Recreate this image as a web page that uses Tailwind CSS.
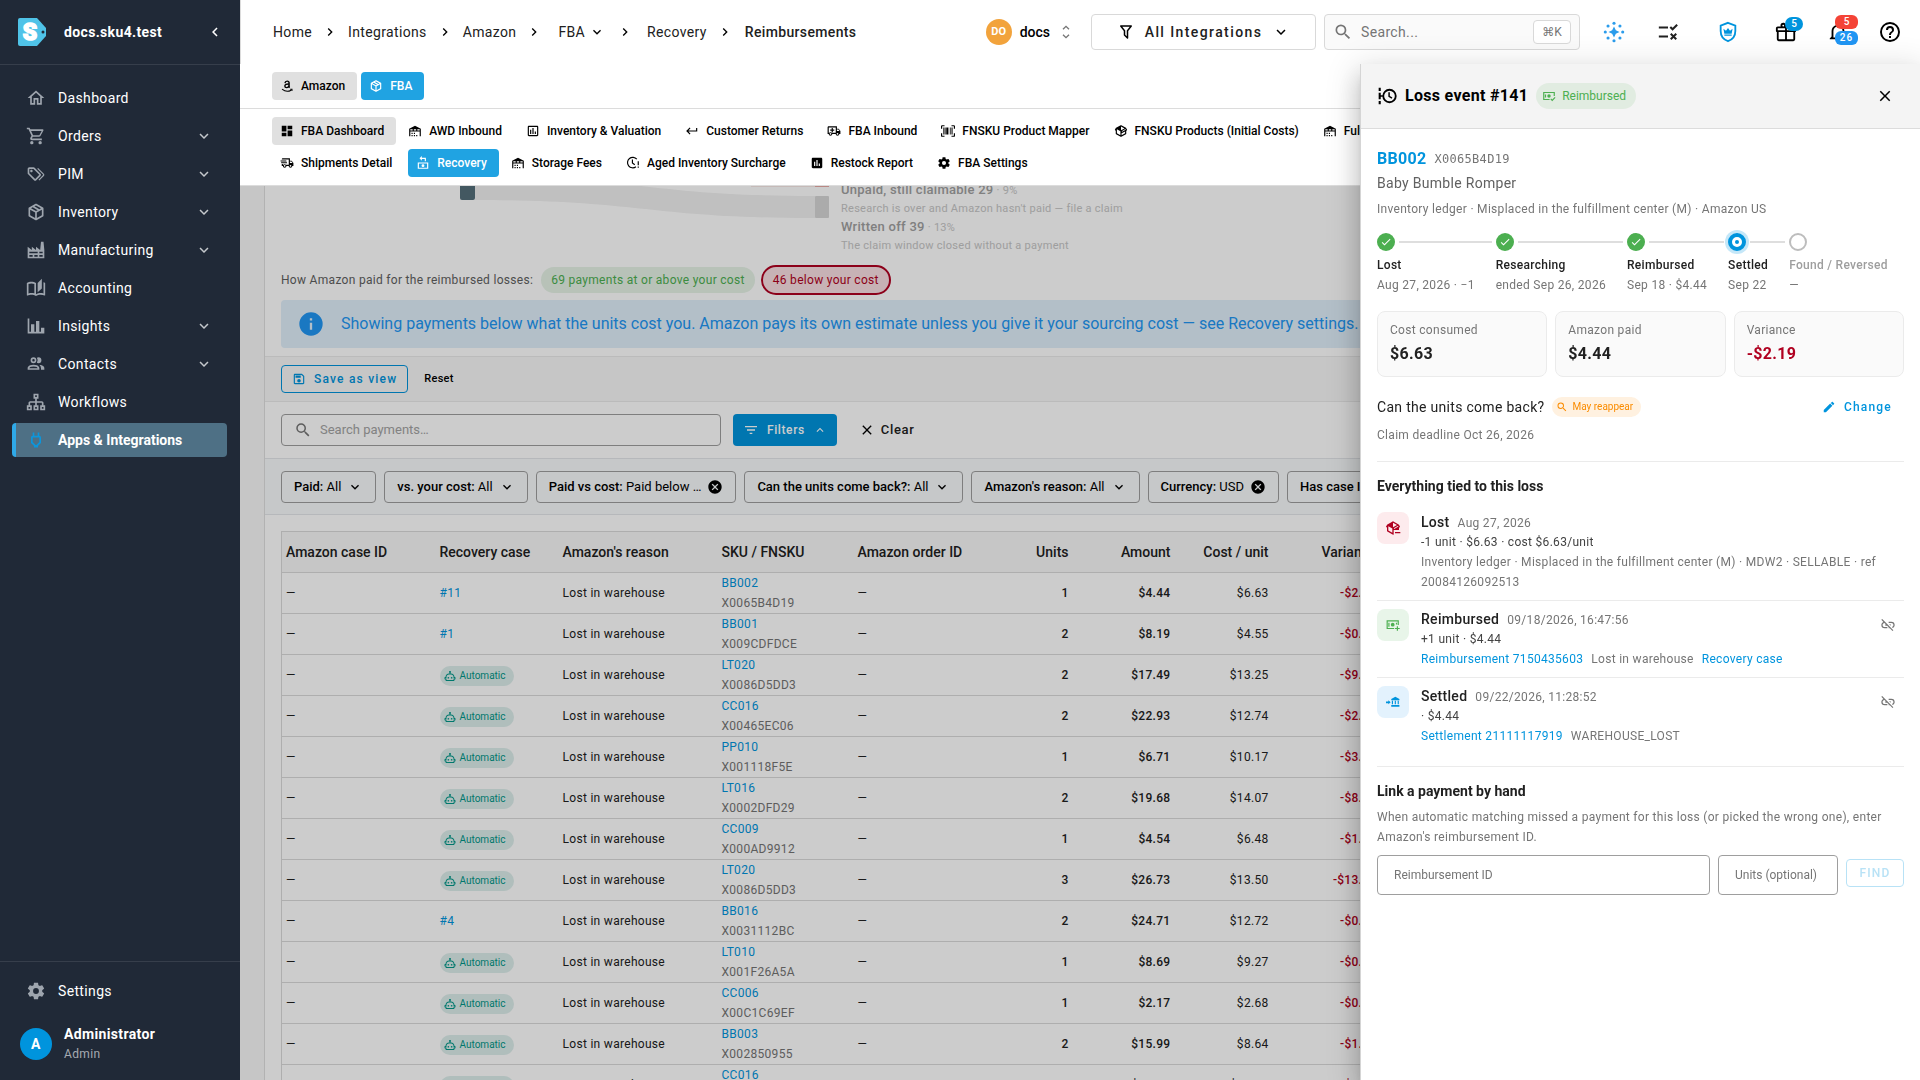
<!DOCTYPE html>
<html lang="en">
  <head>
    <meta charset="utf-8" />
    <meta name="viewport" content="width=device-width" />
    <title>Reimbursements - docs.sku4.test</title>
    <script src="https://cdn.jsdelivr.net/npm/@tailwindcss/browser@4"></script>
  </head>
  <body class="flex h-screen overflow-hidden bg-white font-[Roboto,'Noto_Sans',sans-serif] text-[#212121]">
    <!-- Icon set, used everywhere with <use> -->
    <svg class="hidden" xmlns="http://www.w3.org/2000/svg">
      <symbol id="home" viewBox="0 0 24 24"><path d="M12 5.69L17 10.19V18H15V12H9V18H7V10.19L12 5.69M12 3L2 12H5V20H11V14H13V20H19V12H22L12 3Z" /></symbol>
      <symbol id="cart" viewBox="0 0 24 24"><path d="M17,18A2,2 0 0,1 19,20A2,2 0 0,1 17,22C15.89,22 15,21.1 15,20C15,18.89 15.89,18 17,18M1,2H4.27L5.21,4H20A1,1 0 0,1 21,5C21,5.17 20.95,5.34 20.88,5.5L17.3,11.97C16.96,12.58 16.3,13 15.55,13H8.1L7.2,14.63L7.17,14.75A0.25,0.25 0 0,0 7.42,15H19V17H7C5.89,17 5,16.1 5,15C5,14.65 5.09,14.32 5.24,14.04L6.6,11.59L3,4H1V2M7,18A2,2 0 0,1 9,20A2,2 0 0,1 7,22C5.89,22 5,21.1 5,20C5,18.89 5.89,18 7,18M16,11L18.78,6H6.14L8.5,11H16Z" /></symbol>
      <symbol id="tags" viewBox="0 0 24 24"><path d="M6.5 10C7.3 10 8 9.3 8 8.5S7.3 7 6.5 7 5 7.7 5 8.5 5.7 10 6.5 10M9 6L16 13L11 18L4 11V6H9M9 4H4C2.9 4 2 4.9 2 6V11C2 11.6 2.2 12.1 2.6 12.4L9.6 19.4C9.9 19.8 10.4 20 11 20S12.1 19.8 12.4 19.4L17.4 14.4C17.8 14 18 13.5 18 13C18 12.4 17.8 11.9 17.4 11.6L10.4 4.6C10.1 4.2 9.6 4 9 4M13.5 5.7L14.5 4.7L21.4 11.6C21.8 12 22 12.5 22 13S21.8 14.1 21.4 14.4L16 19.8L15 18.8L20.7 13L13.5 5.7Z" /></symbol>
      <symbol id="box" viewBox="0 0 24 24"><path d="M21,16.5C21,16.88 20.79,17.21 20.47,17.38L12.57,21.82C12.41,21.94 12.21,22 12,22C11.79,22 11.59,21.94 11.43,21.82L3.53,17.38C3.21,17.21 3,16.88 3,16.5V7.5C3,7.12 3.21,6.79 3.53,6.62L11.43,2.18C11.59,2.06 11.79,2 12,2C12.21,2 12.41,2.06 12.57,2.18L20.47,6.62C20.79,6.79 21,7.12 21,7.5V16.5M12,4.15L10.11,5.22L16,8.61L17.96,7.5L12,4.15M6.04,7.5L12,10.85L13.96,9.75L8.08,6.35L6.04,7.5M5,15.91L11,19.29V12.58L5,9.21V15.91M19,15.91V9.21L13,12.58V19.29L19,15.91Z" /></symbol>
      <symbol id="factory" viewBox="0 0 24 24"><path d="M4,18V20H8V18H4M4,14V16H14V14H4M10,18V20H14V18H10M16,14V16H20V14H16M16,18V20H20V18H16M2,22V8L7,12V8L12,12V8L17,12L18,2H21L22,12V22H2Z" /></symbol>
      <symbol id="book" viewBox="0 0 24 24"><path d="M19 1L14 6V17L19 12.5V1M21 5V18.5C19.9 18.15 18.7 18 17.5 18C15.8 18 13.35 18.65 12 19.5V6C10.55 4.9 8.45 4.5 6.5 4.5C4.55 4.5 2.45 4.9 1 6V20.65C1 20.9 1.25 21.15 1.5 21.15C1.6 21.15 1.65 21.1 1.75 21.1C3.1 20.45 5.05 20 6.5 20C8.45 20 10.55 20.4 12 21.5C13.35 20.65 15.8 20 17.5 20C19.15 20 20.85 20.3 22.25 21.05C22.35 21.1 22.4 21.1 22.5 21.1C22.75 21.1 23 20.85 23 20.6V6C22.4 5.55 21.75 5.25 21 5M10 18.41C8.75 18.09 7.5 18 6.5 18C5.44 18 4.18 18.19 3 18.5V7.13C3.91 6.73 5.14 6.5 6.5 6.5C7.86 6.5 9.09 6.73 10 7.13V18.41Z" /></symbol>
      <symbol id="chart" viewBox="0 0 24 24"><path d="M22,21H2V3H4V19H6V10H10V19H12V6H16V19H18V14H22V21Z" /></symbol>
      <symbol id="people" viewBox="0 0 24 24"><path d="M13.07 10.41A5 5 0 0 0 13.07 4.59A3.39 3.39 0 0 1 15 4A3.5 3.5 0 0 1 15 11A3.39 3.39 0 0 1 13.07 10.41M5.5 7.5A3.5 3.5 0 1 1 9 11A3.5 3.5 0 0 1 5.5 7.5M7.5 7.5A1.5 1.5 0 1 0 9 6A1.5 1.5 0 0 0 7.5 7.5M16 17V19H2V17S2 13 9 13 16 17 16 17M14 17C13.86 16.22 12.67 15 9 15S4.07 16.31 4 17M15.95 13A5.32 5.32 0 0 1 18 17V19H22V17S22 13.37 15.94 13Z" /></symbol>
      <symbol id="sitemap" viewBox="0 0 24 24"><path fill-rule="evenodd" d="M9,2V8H11V11H5C3.89,11 3,11.89 3,13V16H1V22H7V16H5V13H11V16H9V22H15V16H13V13H19V16H17V22H23V16H21V13C21,11.89 20.11,11 19,11H13V8H15V2H9M11,4H13V6H11V4M3,18H5V20H3V18M11,18H13V20H11V18M19,18H21V20H19V18Z" /></symbol>
      <symbol id="plug" viewBox="0 0 24 24"><path fill-rule="evenodd" d="M16 9V14.5L12.5 18H11.5L8 14.5V9H16M16 3H14V7H10V3H8V7C6.9 7 6 7.9 6 9V15.5L9.5 19V21H14.5V19L18 15.5V9C18 7.9 17.1 7 16 7V3Z" /></symbol>
      <symbol id="cog" viewBox="0 0 24 24"><path d="M12,15.5A3.5,3.5 0 0,1 8.5,12A3.5,3.5 0 0,1 12,8.5A3.5,3.5 0 0,1 15.5,12A3.5,3.5 0 0,1 12,15.5M19.43,12.97C19.47,12.65 19.5,12.33 19.5,12C19.5,11.67 19.47,11.34 19.43,11L21.54,9.37C21.73,9.22 21.78,8.95 21.66,8.73L19.66,5.27C19.54,5.05 19.27,4.96 19.05,5.05L16.56,6.05C16.04,5.66 15.5,5.32 14.87,5.07L14.5,2.42C14.46,2.18 14.25,2 14,2H10C9.75,2 9.54,2.18 9.5,2.42L9.13,5.07C8.5,5.32 7.96,5.66 7.44,6.05L4.95,5.05C4.73,4.96 4.46,5.05 4.34,5.27L2.34,8.73C2.21,8.95 2.27,9.22 2.46,9.37L4.57,11C4.53,11.34 4.5,11.67 4.5,12C4.5,12.33 4.53,12.65 4.57,12.97L2.46,14.63C2.27,14.78 2.21,15.05 2.34,15.27L4.34,18.73C4.46,18.95 4.73,19.03 4.95,18.95L7.44,17.94C7.96,18.34 8.5,18.68 9.13,18.93L9.5,21.58C9.54,21.82 9.75,22 10,22H14C14.25,22 14.46,21.82 14.5,21.58L14.87,18.93C15.5,18.67 16.04,18.34 16.56,17.94L19.05,18.95C19.27,19.03 19.54,18.95 19.66,18.73L21.66,15.27C21.78,15.05 21.73,14.78 21.54,14.63L19.43,12.97Z" /></symbol>
      <symbol id="down" viewBox="0 0 24 24"><path d="M7.41,8.58L12,13.17L16.59,8.58L18,10L12,16L6,10L7.41,8.58Z" /></symbol>
      <symbol id="up" viewBox="0 0 24 24"><path d="M7.41,15.41L12,10.83L16.59,15.41L18,14L12,8L6,14L7.41,15.41Z" /></symbol>
      <symbol id="right" viewBox="0 0 24 24"><path d="M8.59,16.58L13.17,12L8.59,7.41L10,6L16,12L10,18L8.59,16.58Z" /></symbol>
      <symbol id="left" viewBox="0 0 24 24"><path d="M15.41,16.58L10.83,12L15.41,7.41L14,6L8,12L14,18L15.41,16.58Z" /></symbol>
      <symbol id="updown" viewBox="0 0 24 24"><path d="M7.5 8L12 3.500L16.5 8M7.5 16L12 20.500L16.5 16" fill="none" stroke="currentColor" stroke-width="2" /></symbol>
      <symbol id="amazon" viewBox="0 0 24 24"><path d="M8.5 7C8.8 4.6 10.4 3.6 12.3 3.6C14.6 3.6 15.6 4.8 15.6 6.8V12.4C15.6 13.6 15.9 14.2 16.6 14.8M15.4 8.6C11 8.4 8.3 9.4 8.3 12C8.3 14 9.6 14.8 11.2 14.8C13.4 14.8 15.4 13.2 15.4 10.8" fill="none" stroke="currentColor" stroke-width="2.4" /><path d="M3.5 17.5C8.5 21.5 15 21.5 19 19.2M17.5 17.6H20.5V20.6" fill="none" stroke="currentColor" stroke-width="1.8" /></symbol>
      <symbol id="dash" viewBox="0 0 24 24"><path d="M13,3V9H21V3M13,21H21V11H13M3,21H11V15H3M3,13H11V3H3V13Z" /></symbol>
      <symbol id="warehouse" viewBox="0 0 24 24"><path d="M6 19H8V21H6V19M12 3L2 8V21H4V13H20V21H22V8L12 3M8 11H4V9H8V11M14 11H10V9H14V11M20 11H16V9H20V11M6 15H8V17H6V15M10 15H12V17H10V15M10 19H12V21H10V19M14 19H16V21H14V19Z" /></symbol>
      <symbol id="boxchart" viewBox="0 0 24 24"><path d="M9 17H7V10H9V17M13 17H11V7H13V17M17 17H15V13H17V17M19 19H5V5H19V19.1M19 3H5C3.9 3 3 3.9 3 5V19C3 20.1 3.9 21 5 21H19C20.1 21 21 20.1 21 19V5C21 3.9 20.1 3 19 3Z" /></symbol>
      <symbol id="boxchart-solid" viewBox="0 0 24 24"><path fill-rule="evenodd" d="M19,3H5C3.9,3 3,3.9 3,5V19C3,20.1 3.9,21 5,21H19C20.1,21 21,20.1 21,19V5C21,3.9 20.1,3 19,3M9,17H7V10H9V17M13,17H11V7H13V17M17,17H15V13H17V17Z" /></symbol>
      <symbol id="return" viewBox="0 0 24 24"><path d="M19,7V11H5.83L9.41,7.41L8,6L2,12L8,18L9.41,16.58L5.83,13H21V7H19Z" /></symbol>
      <symbol id="truck" viewBox="0 0 24 24"><path d="M18 18.5C18.83 18.5 19.5 17.83 19.5 17C19.5 16.17 18.83 15.5 18 15.5C17.17 15.5 16.5 16.17 16.5 17C16.5 17.83 17.17 18.5 18 18.5M19.5 9.5H17V12H21.46L19.5 9.5M6 18.5C6.83 18.5 7.5 17.83 7.5 17C7.5 16.17 6.83 15.5 6 15.5C5.17 15.5 4.5 16.17 4.5 17C4.5 17.83 5.17 18.5 6 18.5M20 8L23 12V17H21C21 18.66 19.66 20 18 20C16.34 20 15 18.66 15 17H9C9 18.66 7.66 20 6 20C4.34 20 3 18.66 3 17H1V6C1 4.89 1.89 4 3 4H17V8H20M3 6V15H3.76C4.31 14.39 5.11 14 6 14C6.89 14 7.69 14.39 8.24 15H15V6H3M8 7H10V9.5H12.5V11.5H10V14H8V11.5H5.5V9.5H8V7Z" /></symbol>
      <symbol id="truckfast" viewBox="0 0 24 24"><path d="M.75 7.5H10.75L11.25 9.5H1.25L.75 7.5M1.75 10.5H11.75L12.25 12.5H2.25L1.75 10.5M18 18.5C18.83 18.5 19.5 17.83 19.5 17C19.5 16.17 18.83 15.5 18 15.5C17.17 15.5 16.5 16.17 16.5 17C16.5 17.83 17.17 18.5 18 18.5M19.5 9.5H17V12H21.46L19.5 9.5M8 18.5C8.83 18.5 9.5 17.83 9.5 17C9.5 16.17 8.83 15.5 8 15.5C7.17 15.5 6.5 16.17 6.5 17C6.5 17.83 7.17 18.5 8 18.5M20 8L23 12V17H21C21 18.66 19.66 20 18 20C16.34 20 15 18.66 15 17H11C11 18.66 9.65 20 8 20C6.34 20 5 18.66 5 17H3V13.5H5V15H5.76C6.31 14.39 7.11 14 8 14C8.89 14 9.69 14.39 10.24 15H15V6H3C3 4.89 3.89 4 5 4H17V8H20Z" /></symbol>
      <symbol id="barcode" viewBox="0 0 24 24"><path d="M4,6H6V18H4V6M7,6H8V18H7V6M9,6H12V18H9V6M13,6H14V18H13V6M16,6H18V18H16V6M19,6H20V18H19V6M2,4V8H0V4A2,2 0 0,1 2,2H6V4H2M22,2A2,2 0 0,1 24,4V8H22V4H18V2H22M2,16V20H6V22H2A2,2 0 0,1 0,20V16H2M22,20V16H24V20A2,2 0 0,1 22,22H18V20H22Z" /></symbol>
      <symbol id="openbox" viewBox="0 0 24 24"><path d="M2,10.96C1.5,10.68 1.35,10.07 1.63,9.59L3.13,7C3.24,6.8 3.41,6.66 3.6,6.58L11.43,2.18C11.59,2.06 11.79,2 12,2C12.21,2 12.41,2.06 12.57,2.18L20.47,6.62C20.66,6.72 20.82,6.88 20.91,7.08L22.36,9.6C22.64,10.08 22.47,10.69 22,10.96L21,11.54V16.5C21,16.88 20.79,17.21 20.47,17.38L12.57,21.82C12.41,21.94 12.21,22 12,22C11.79,22 11.59,21.94 11.43,21.82L3.53,17.38C3.21,17.21 3,16.88 3,16.5V10.96C2.7,11.13 2.32,11.14 2,10.96M12,4.15V4.15L12,10.85V10.85L17.96,7.5L12,4.15M5,15.91L11,19.29V12.58L5,9.21V15.91M19,15.91V12.69L14,15.59C13.67,15.77 13.3,15.76 13,15.6V19.29L19,15.91M13.85,13.36L20.13,9.73L19.55,8.72L13.27,12.35L13.85,13.36Z" /></symbol>
      <symbol id="boxminus" viewBox="0 0 24 24"><path d="M2,10.96C1.5,10.68 1.35,10.07 1.63,9.59L3.13,7C3.24,6.8 3.41,6.66 3.6,6.58L11.43,2.18C11.59,2.06 11.79,2 12,2C12.21,2 12.41,2.06 12.57,2.18L20.47,6.62C20.66,6.72 20.82,6.88 20.91,7.08L22.36,9.6C22.64,10.08 22.47,10.69 22,10.96L21,11.54V15H13V22H12C11.79,22 11.59,21.94 11.43,21.82L3.53,17.38C3.21,17.21 3,16.88 3,16.5V10.96C2.7,11.13 2.32,11.14 2,10.96M12,4.15L12,10.85L17.96,7.5L12,4.15M5,15.91L11,19.29V12.58L5,9.21V15.91M13.85,13.36L20.13,9.73L19.55,8.72L13.27,12.35L13.85,13.36ZM15 18H23V20H15Z" /></symbol>
      <symbol id="recovery" viewBox="0 0 24 24"><path fill-rule="evenodd" d="M3 11H21V22H3V11M5 13V20H19V13H5M12 14A2.5 2.5 0 1 1 12 19A2.5 2.5 0 1 1 12 14M10 0L6 4L10 8V5H15V9H17V3H10V0" /></symbol>
      <symbol id="clockalert" viewBox="0 0 24 24"><path d="M17 18.5A9 9 0 1 1 18.5 5.5M11 6V12L15 15" fill="none" stroke="currentColor" stroke-width="2" /><path d="M20 9H22V16H20zM20 18H22V20H20z" /></symbol>
      <symbol id="search" viewBox="0 0 24 24"><path d="M9.5,3A6.5,6.5 0 0,1 16,9.5C16,11.11 15.41,12.59 14.44,13.73L14.71,14H15.5L20.5,19L19,20.5L14,15.5V14.71L13.73,14.44C12.59,15.41 11.11,16 9.5,16A6.5,6.5 0 0,1 3,9.5A6.5,6.5 0 0,1 9.5,3M9.5,5C7,5 5,7 5,9.5C5,12 7,14 9.5,14C12,14 14,12 14,9.5C14,7 12,5 9.5,5Z" /></symbol>
      <symbol id="funnel" viewBox="0 0 24 24"><path d="M15,19.88C15.04,20.18 14.94,20.5 14.71,20.71C14.32,21.1 13.69,21.1 13.3,20.71L9.29,16.7C9.06,16.47 8.96,16.16 9,15.87V10.75L4.21,4.62C3.87,4.19 3.95,3.56 4.38,3.22C4.57,3.08 4.78,3 5,3V3H19V3C19.22,3 19.43,3.08 19.62,3.22C20.05,3.56 20.13,4.19 19.79,4.62L15,10.75V19.88M7.04,5L11,10.06V15.58L13,17.58V10.05L16.96,5H7.04Z" /></symbol>
      <symbol id="spark" viewBox="0 0 24 24"><path d="M12 6L14 10L18 12L14 14L12 18L10 14L6 12L10 10Z" /><circle cx="12" cy="2.5" r="1.7" /><circle cx="12" cy="21.5" r="1.7" /><circle cx="2.5" cy="12" r="1.7" /><circle cx="21.5" cy="12" r="1.7" /><circle cx="5.500" cy="5.500" r="1.7" /><circle cx="18.500" cy="5.500" r="1.7" /><circle cx="5.500" cy="18.500" r="1.7" /><circle cx="18.500" cy="18.500" r="1.7" /></symbol>
      <symbol id="checks" viewBox="0 0 24 24"><path d="M2 7H12M2 17H12M14.5 6.5L17 9L22 4M15 14L21 20M21 14L15 20" fill="none" stroke="currentColor" stroke-width="2.2" /></symbol>
      <symbol id="shield" viewBox="0 0 24 24"><path d="M12 2L20 5V11C20 16 16.8 20.4 12 22C7.2 20.4 4 16 4 11V5Z" fill="none" stroke="currentColor" stroke-width="2" /><path d="M8 16H16V14.8H8M16 13.8L17 8.5L14.2 10.5L12 7.5L9.8 10.5L7 8.5L8 13.8Z" /></symbol>
      <symbol id="gift" viewBox="0 0 24 24"><path d="M22,12V20A2,2 0 0,1 20,22H4A2,2 0 0,1 2,20V12A1,1 0 0,1 1,11V8A2,2 0 0,1 3,6H6.17C6.06,5.69 6,5.35 6,5A3,3 0 0,1 9,2C10,2 10.88,2.5 11.43,3.24V3.23L12,4L12.57,3.23V3.24C13.12,2.5 14,2 15,2A3,3 0 0,1 18,5C18,5.35 17.94,5.69 17.83,6H21A2,2 0 0,1 23,8V11A1,1 0 0,1 22,12M4,20H11V12H4V20M20,20V12H13V20H20M9,4A1,1 0 0,0 8,5A1,1 0 0,0 9,6A1,1 0 0,0 10,5A1,1 0 0,0 9,4M15,4A1,1 0 0,0 14,5A1,1 0 0,0 15,6A1,1 0 0,0 16,5A1,1 0 0,0 15,4M3,8V10H11V8H3M13,8V10H21V8H13Z" /></symbol>
      <symbol id="bell" viewBox="0 0 24 24"><path d="M10 21H14C14 22.1 13.1 23 12 23S10 22.1 10 21M21 19V20H3V19L5 17V11C5 7.9 7 5.2 10 4.3V4C10 2.9 10.9 2 12 2S14 2.9 14 4V4.3C17 5.2 19 7.9 19 11V17L21 19M17 11C17 8.2 14.8 6 12 6S7 8.2 7 11V18H17V11Z" /></symbol>
      <symbol id="help" viewBox="0 0 24 24"><path d="M11,18H13V16H11V18M12,2A10,10 0 0,0 2,12A10,10 0 0,0 12,22A10,10 0 0,0 22,12A10,10 0 0,0 12,2M12,20C7.59,20 4,16.41 4,12C4,7.59 7.59,4 12,4C16.41,4 20,7.59 20,12C20,16.41 16.41,20 12,20M12,6A4,4 0 0,0 8,10H10A2,2 0 0,1 12,8A2,2 0 0,1 14,10C14,12 11,11.75 11,15H13C13,12.75 16,12.5 16,10A4,4 0 0,0 12,6Z" /></symbol>
      <symbol id="info" viewBox="0 0 24 24"><path d="M13,9H11V7H13M13,17H11V11H13M12,2A10,10 0 0,0 2,12A10,10 0 0,0 12,22A10,10 0 0,0 22,12A10,10 0 0,0 12,2Z" /></symbol>
      <symbol id="save" viewBox="0 0 24 24"><path d="M17 3H5C3.89 3 3 3.9 3 5V19C3 20.1 3.89 21 5 21H19C20.1 21 21 20.1 21 19V7L17 3M19 19H5V5H16.17L19 7.83V19M12 12C10.34 12 9 13.34 9 15S10.34 18 12 18 15 16.66 15 15 13.66 12 12 12M6 6H15V10H6V6Z" /></symbol>
      <symbol id="filter" viewBox="0 0 24 24"><path d="M6,13H18V11H6M3,6V8H21V6M10,18H14V16H10V18Z" /></symbol>
      <symbol id="close" viewBox="0 0 24 24"><path d="M19,6.41L17.59,5L12,10.59L6.41,5L5,6.41L10.59,12L5,17.59L6.41,19L12,13.41L17.59,19L19,17.59L13.41,12L19,6.41Z" /></symbol>
      <symbol id="clear" viewBox="0 0 24 24"><path d="M12,2C17.53,2 22,6.47 22,12C22,17.53 17.53,22 12,22C6.47,22 2,17.53 2,12C2,6.47 6.47,2 12,2M15.59,7L12,10.59L8.41,7L7,8.41L10.59,12L7,15.59L8.41,17L12,13.41L15.59,17L17,15.59L13.41,12L17,8.41L15.59,7Z" /></symbol>
      <symbol id="robot" viewBox="0 0 24 24"><path fill-rule="evenodd" d="M10.4 15.5A1.7 1.7 0 1 1 7 15.5A1.7 1.7 0 1 1 10.4 15.5M17 15.5A1.7 1.7 0 1 1 13.6 15.5A1.7 1.7 0 1 1 17 15.5M23 15V18C23 18.55 22.55 19 22 19H21V20C21 21.11 20.11 22 19 22H5C3.9 22 3 21.11 3 20V19H2C1.45 19 1 18.55 1 18V15C1 14.45 1.45 14 2 14H3C3 10.13 6.13 7 10 7H11V5.73C10.4 5.39 10 4.74 10 4C10 2.9 10.9 2 12 2S14 2.9 14 4C14 4.74 13.6 5.39 13 5.73V7H14C17.87 7 21 10.13 21 14H22C22.55 14 23 14.45 23 15M21 16H19V14C19 11.24 16.76 9 14 9H10C7.24 9 5 11.24 5 14V16H3V17H5V20H19V17H21V16Z" /></symbol>
      <symbol id="pencil" viewBox="0 0 24 24"><path d="M20.71,7.04C21.1,6.65 21.1,6 20.71,5.63L18.37,3.29C18,2.9 17.35,2.9 16.96,3.29L15.12,5.12L18.87,8.87M3,17.25V21H6.75L17.81,9.93L14.06,6.18L3,17.25Z" /></symbol>
      <symbol id="unlink" viewBox="0 0 24 24"><path d="M17,7H13V8.9H17C18.71,8.9 20.1,10.29 20.1,12C20.1,13.43 19.12,14.63 17.79,15L19.25,16.44C20.88,15.61 22,13.95 22,12A5,5 0 0,0 17,7M16,11H13.81L15.81,13H16V11M2,4.27L5.11,7.38C3.29,8.12 2,9.91 2,12A5,5 0 0,0 7,17H11V15.1H7C5.29,15.1 3.9,13.71 3.9,12C3.9,10.41 5.11,9.1 6.66,8.93L8.73,11H8V13H10.73L13,15.27V17H14.73L18.74,21L20,19.74L3.27,3L2,4.27Z" /></symbol>
      <symbol id="check" viewBox="0 0 24 24"><path d="M21,7L9,19L3.5,13.5L4.91,12.09L9,16.17L19.59,5.59L21,7Z" /></symbol>
      <symbol id="timeline" viewBox="0 0 24 24"><path d="M2 2H4.500V6H2zM2 18H4.500V22H2zM2 8H4.500V11H7V13H4.500V16H2z" /><circle cx="15" cy="12" r="7.5" fill="none" stroke="currentColor" stroke-width="2.2" /><path d="M14.5 7.500V12.500L18 14.600" fill="none" stroke="currentColor" stroke-width="1.8" /></symbol>
      <symbol id="cashcheck" viewBox="0 0 24 24"><path d="M13 18H3V6H21V12M6 9.5V14.5" fill="none" stroke="currentColor" stroke-width="2" /><circle cx="12" cy="12" r="3" /><path d="M15 17L17.5 19.5L22.5 14.5" fill="none" stroke="currentColor" stroke-width="2" /></symbol>
      <symbol id="cashplus" viewBox="0 0 24 24"><path d="M14 18H2V5H21V12M5 8V15M18 8V11" fill="none" stroke="currentColor" stroke-width="2" /><circle cx="11.5" cy="11.5" r="3.2" /><path d="M19.5 14V22M15.5 18H23.5" fill="none" stroke="currentColor" stroke-width="2" /></symbol>
      <symbol id="bank" viewBox="0 0 24 24"><path d="M9 9V7L16 3L23 7V9zM10 10H12V16H10zM15 10H17V16H15zM20 10H22V16H20zM9 17H23V20H9zM4 9L8 12.5L4 16V14H0V11H4z" /></symbol>
    </svg>

    <aside class="flex w-60 shrink-0 flex-col bg-[#202937] text-sm tracking-wide text-white">
      <div class="flex h-[65px] items-center border-b border-white/10 pr-4 pl-[18px]">
        <svg class="size-7" viewBox="0 0 28 28">
          <path d="M2 0H19L28 10V18L19 28H2Q0 28 0 26V2Q0 0 2 0Z" fill="#4fc3e8" />
          <circle cx="25" cy="14" r="1.5" fill="#202937" />
          <text x="12" y="22" text-anchor="middle" font-family="Roboto" font-size="23" font-weight="900" fill="#fff" stroke="#fff" stroke-width="1.5">S</text>
        </svg>
        <span class="ml-[18px] flex-1 font-bold">docs.sku4.test</span>
        <button aria-label="Collapse menu"><svg class="size-[18px] fill-current"><use href="#left" /></svg></button>
      </div>
      <nav class="flex flex-1 flex-col gap-1 pt-4 pr-[13px] pl-3">
        <a href="#" class="flex h-[34px] items-center gap-3 px-3.5"><svg class="size-5 fill-[#9ea5ae]"><use href="#home" /></svg>Dashboard</a>
        <a href="#" class="flex h-[34px] items-center gap-3 px-3.5"><svg class="size-5 fill-[#9ea5ae]"><use href="#cart" /></svg><span class="flex-1">Orders</span><svg class="size-[18px] fill-[#c4c8cc]"><use href="#down" /></svg></a>
        <a href="#" class="flex h-[34px] items-center gap-3 px-3.5"><svg class="size-5 fill-[#9ea5ae]"><use href="#tags" /></svg><span class="flex-1">PIM</span><svg class="size-[18px] fill-[#c4c8cc]"><use href="#down" /></svg></a>
        <a href="#" class="flex h-[34px] items-center gap-3 px-3.5"><svg class="size-5 fill-[#9ea5ae]"><use href="#box" /></svg><span class="flex-1">Inventory</span><svg class="size-[18px] fill-[#c4c8cc]"><use href="#down" /></svg></a>
        <a href="#" class="flex h-[34px] items-center gap-3 px-3.5"><svg class="size-5 fill-[#9ea5ae]"><use href="#factory" /></svg><span class="flex-1">Manufacturing</span><svg class="size-[18px] fill-[#c4c8cc]"><use href="#down" /></svg></a>
        <a href="#" class="flex h-[34px] items-center gap-3 px-3.5"><svg class="size-5 fill-[#9ea5ae]"><use href="#book" /></svg>Accounting</a>
        <a href="#" class="flex h-[34px] items-center gap-3 px-3.5"><svg class="size-5 fill-[#9ea5ae]"><use href="#chart" /></svg><span class="flex-1">Insights</span><svg class="size-[18px] fill-[#c4c8cc]"><use href="#down" /></svg></a>
        <a href="#" class="flex h-[34px] items-center gap-3 px-3.5"><svg class="size-5 fill-[#9ea5ae]"><use href="#people" /></svg><span class="flex-1">Contacts</span><svg class="size-[18px] fill-[#c4c8cc]"><use href="#down" /></svg></a>
        <a href="#" class="flex h-[34px] items-center gap-3 px-3.5"><svg class="size-5 fill-[#9ea5ae]"><use href="#sitemap" /></svg>Workflows</a>
        <a href="#" class="flex h-[34px] items-center gap-3 rounded border-l-4 border-[#2fa9e8] bg-[#4e7085] pr-3.5 pl-2.5 font-bold tracking-normal"><svg class="size-5 fill-[#0b96dc]"><use href="#plug" /></svg>Apps &amp; Integrations</a>
      </nav>
      <div class="border-t border-white/10 px-5 pt-3 pb-4">
        <a href="#" class="flex h-[34px] items-center gap-3 px-1.5"><svg class="size-5 fill-[#9ea5ae]"><use href="#cog" /></svg>Settings</a>
        <div class="mt-4 flex items-center gap-3">
          <span class="flex size-8 items-center justify-center rounded-full bg-[#0094dd] font-bold">A</span>
          <div>
            <div class="leading-5 font-bold">Administrator</div>
            <div class="text-xs leading-5 text-[#a6abb2]">Admin</div>
          </div>
        </div>
      </div>
    </aside>

    <div class="flex min-w-0 flex-1 flex-col">
      <header class="flex h-16 shrink-0 items-center border-l border-[#dcdcdc] pr-[18px] pl-8 text-sm">
        <nav class="flex flex-1 items-center tracking-wide">
          <a href="#">Home</a><svg class="mx-2.5 size-4"><use href="#right" /></svg>
          <a href="#">Integrations</a><svg class="mx-2.5 size-4"><use href="#right" /></svg>
          <a href="#">Amazon</a><svg class="mr-4 ml-2.5 size-4"><use href="#right" /></svg>
          <button class="flex items-center gap-1">FBA<svg class="size-4"><use href="#down" /></svg></button><svg class="mr-3.5 ml-3 size-4"><use href="#right" /></svg>
          <a href="#">Recovery</a><svg class="mr-3 ml-2.5 size-4"><use href="#right" /></svg>
          <span class="font-medium">Reimbursements</span>
        </nav>
        <button class="mr-[17px] flex items-center text-black">
          <span class="mr-2 flex size-[26px] items-center justify-center rounded-full bg-[#f2a33c] text-[11px] font-bold text-white">DO</span>
          <span class="font-medium">docs</span>
          <svg class="ml-2 size-4 text-[#757575]"><use href="#updown" /></svg>
        </button>
        <button class="mr-2 flex h-9 w-[225px] items-center justify-center gap-2.5 rounded border border-[#d9d9d9] font-medium tracking-widest"><svg class="size-[18px]"><use href="#funnel" /></svg>All Integrations<svg class="size-[18px]"><use href="#down" /></svg></button>
        <label class="flex h-9 w-64 items-center gap-2 rounded border border-[#d9d9d9] bg-[#fafafa] pr-2 pl-2">
          <svg class="size-5 fill-[#757575]"><use href="#search" /></svg>
          <input class="min-w-0 flex-1 bg-transparent tracking-wide outline-none placeholder:text-[#757575]" type="text" aria-label="Search" placeholder="Search..." />
          <kbd class="flex h-6 w-[38px] items-center justify-center rounded border border-[#d9d9d9] bg-white font-[Roboto,'DejaVu_Sans',sans-serif] text-xs text-[#757575]">⌘K</kbd>
        </label>
        <div class="ml-[23px] flex items-center">
          <button aria-label="Assistant" class="mr-8"><svg class="size-[22px] fill-[#2b9ceb]"><use href="#spark" /></svg></button>
          <button aria-label="Tasks" class="mr-[38px]"><svg class="size-[22px]"><use href="#checks" /></svg></button>
          <button aria-label="Security" class="mr-9"><svg class="size-[22px] fill-[#0094dd] text-[#0094dd]"><use href="#shield" /></svg></button>
          <button aria-label="What is new" class="relative mr-[30px]"><svg class="size-[22px]"><use href="#gift" /></svg><span class="absolute -top-1 left-2.5 flex h-[14px] w-[18px] items-center justify-center rounded-full bg-[#0094dd] text-[10px] font-medium text-white">5</span></button>
          <button aria-label="Notifications" class="relative mr-[29px]"><svg class="size-[22px]"><use href="#bell" /></svg><span class="absolute -top-[6px] left-2 flex h-[14px] w-[23px] items-center justify-center rounded-md bg-[#f44336] text-[10px] font-medium text-white">5</span><span class="absolute top-2.5 left-2 flex h-[14px] w-[23px] items-center justify-center rounded-md bg-[#2196f3] text-[10px] font-medium tracking-widest text-white">26</span></button>
          <button aria-label="Help"><svg class="size-6"><use href="#help" /></svg></button>
        </div>
      </header>

      <nav class="shrink-0 text-xs font-medium text-black">
        <div class="flex h-[45px] items-center gap-1 border-b border-[#dcdcdc] pl-8">
          <a href="#" class="flex h-7 items-center gap-[7px] rounded bg-[#e0e0e0] pr-3 pl-2"><svg class="size-3.5"><use href="#amazon" /></svg>Amazon</a>
          <a href="#" class="flex h-7 items-center gap-[7px] rounded bg-[#20a3e2] pr-3 pl-2 text-white"><svg class="size-3.5 fill-current"><use href="#box" /></svg>FBA</a>
        </div>
        <div class="flex flex-col gap-1 overflow-hidden border-b border-[#dcdcdc] py-2 pl-8 whitespace-nowrap">
          <div class="flex gap-1">
            <a href="#" class="flex h-7 items-center gap-[7px] rounded bg-[#e0e0e0] pr-3 pl-2"><svg class="size-3.5"><use href="#dash" /></svg>FBA Dashboard</a>
            <a href="#" class="flex h-7 items-center gap-[7px] pr-3 pl-2"><svg class="size-3.5"><use href="#warehouse" /></svg>AWD Inbound</a>
            <a href="#" class="flex h-7 items-center gap-[7px] pr-3 pl-2"><svg class="size-3.5"><use href="#boxchart" /></svg>Inventory &amp; Valuation</a>
            <a href="#" class="flex h-7 items-center gap-[7px] pr-3 pl-2"><svg class="size-3.5"><use href="#return" /></svg>Customer Returns</a>
            <a href="#" class="flex h-7 items-center gap-[7px] pr-3 pl-2"><svg class="size-3.5"><use href="#truck" /></svg>FBA Inbound</a>
            <a href="#" class="flex h-7 items-center gap-[7px] pr-3 pl-2"><svg class="size-3.5"><use href="#barcode" /></svg>FNSKU Product Mapper</a>
            <a href="#" class="flex h-7 items-center gap-[7px] pr-3 pl-2"><svg class="size-3.5"><use href="#openbox" /></svg>FNSKU Products (Initial Costs)</a>
            <a href="#" class="flex h-7 items-center gap-[7px] pr-3 pl-2"><svg class="size-3.5"><use href="#warehouse" /></svg>Fulfillment Centers</a>
          </div>
          <div class="flex gap-1">
            <a href="#" class="flex h-7 items-center gap-[7px] pr-3 pl-2"><svg class="size-3.5"><use href="#truckfast" /></svg>Shipments Detail</a>
            <a href="#" class="flex h-7 items-center gap-[7px] rounded bg-[#20a3e2] pr-3 pl-2 text-white"><svg class="size-3.5 fill-current"><use href="#recovery" /></svg>Recovery</a>
            <a href="#" class="flex h-7 items-center gap-[7px] pr-3 pl-2"><svg class="size-3.5"><use href="#warehouse" /></svg>Storage Fees</a>
            <a href="#" class="flex h-7 items-center gap-[7px] pr-3 pl-2"><svg class="size-3.5"><use href="#clockalert" /></svg>Aged Inventory Surcharge</a>
            <a href="#" class="flex h-7 items-center gap-[7px] pr-3 pl-2"><svg class="size-3.5"><use href="#boxchart-solid" /></svg>Restock Report</a>
            <a href="#" class="flex h-7 items-center gap-[7px] pr-3 pl-2"><svg class="size-3.5"><use href="#cog" /></svg>FBA Settings</a>
          </div>
        </div>
      </nav>

      <main class="relative min-h-0 flex-1 overflow-hidden bg-[#f8f8f8] pl-6">
        <div class="border-l border-[#dfdfdf] bg-white">
          <!-- Where the losses went: tail end of the flow chart -->
          <div class="flex h-[73px] items-start gap-3 px-4">
            <svg class="h-[34px] w-[548px] shrink-0" viewBox="0 0 548 34">
              <path d="M194 -9C364 -9 364 10 534 10V32C364 32 364 14 194 14Z" fill="#f0f0f0" />
              <path d="M470 0H534" stroke="#f0d3d0" />
              <path d="M179 0H194V12Q194 14 192 14H181Q179 14 179 12Z" fill="#546e7a" />
              <rect x="534" y="0" width="14" height="1" fill="#e8aaa6" />
              <rect x="534" y="10" width="14" height="22" rx="1" fill="#d6d6d6" />
            </svg>
            <div class="-mt-[5px] text-[11px] leading-[18px] tracking-wide text-[#c6c6c6]">
              <div><b class="text-[13px] font-medium text-[#a0a0a0]">Unpaid, still claimable 29</b> · 9%</div>
              <div>Research is over and Amazon hasn't paid — file a claim</div>
              <div><b class="text-[13px] font-medium text-[#a0a0a0]">Written off 39</b> · 13%</div>
              <div>The claim window closed without a payment</div>
            </div>
          </div>
          <div class="flex h-[41px] items-center gap-1.5 px-4 text-xs tracking-wide">
            <span class="mr-0.5 text-[#616161]">How Amazon paid for the reimbursed losses:</span>
            <button class="h-[26px] rounded-full bg-[#e6f3e7] px-2.5 text-[#4caf50]">69 payments at or above your cost</button>
            <button class="h-[30px] rounded-full border-2 border-[#b00020] bg-[#f9dfe3] px-2.5 text-[#b00020]">46 below your cost</button>
          </div>
          <div class="mb-2 ml-4 flex h-12 items-center rounded bg-[#e0effb] pl-4 whitespace-nowrap text-[#2196f3]">
            <svg class="mr-4 size-7 fill-current"><use href="#info" /></svg>Showing payments below what the units cost you. Amazon pays its own estimate unless you give it your sourcing cost — see Recovery settings.
          </div>
          <div class="flex h-[45px] items-center gap-4 border-t border-[#eaeaea] bg-[#f8f8f8] px-4">
            <button class="flex h-7 items-center gap-2 rounded border border-[#0094dd] px-2.5 text-xs font-medium tracking-widest text-[#0094dd]"><svg class="size-3.5 fill-current"><use href="#save" /></svg>Save as view</button>
            <button class="text-[11px] font-medium tracking-wide text-black">Reset</button>
          </div>
          <div class="flex h-[57px] items-center border-t border-[#eaeaea] px-4">
            <label class="flex h-8 w-[440px] items-center gap-2 rounded border border-[#9e9e9e] px-3">
              <svg class="size-[18px] fill-[#757575]"><use href="#search" /></svg>
              <input class="flex-1 text-[13px] outline-none placeholder:text-[#a3a3a3]" type="text" aria-label="Search payments" placeholder="Search payments…" />
            </label>
            <button class="ml-3 flex h-8 items-center gap-2 rounded bg-[#0094dd] px-2.5 text-xs font-medium tracking-wider text-white"><svg class="size-4 fill-current"><use href="#filter" /></svg>Filters<svg class="size-3.5 fill-current"><use href="#up" /></svg></button>
            <button class="ml-[22px] flex items-center gap-1.5 text-[13px] font-medium tracking-wider"><svg class="size-4"><use href="#close" /></svg>Clear</button>
          </div>
          <div class="flex h-[57px] items-center gap-2 overflow-hidden border-y border-[#e4e7ea] bg-[#f8fafc] px-4 text-[13px] whitespace-nowrap text-black">
            <button class="flex h-8 shrink-0 items-center gap-1.5 rounded border border-[#9e9e9e] px-3"><span><b class="font-medium">Paid:</b> All</span><svg class="size-4"><use href="#down" /></svg></button>
            <button class="flex h-8 shrink-0 items-center gap-1.5 rounded border border-[#9e9e9e] px-3"><span><b class="font-medium">vs. your cost:</b> All</span><svg class="size-4"><use href="#down" /></svg></button>
            <button class="flex h-8 shrink-0 items-center gap-1.5 rounded border border-[#9e9e9e] px-3"><span><b class="font-medium">Paid vs cost:</b> Paid below …</span><svg class="size-4"><use href="#clear" /></svg></button>
            <button class="flex h-8 shrink-0 items-center gap-1.5 rounded border border-[#9e9e9e] px-3"><span><b class="font-medium">Can the units come back?:</b> All</span><svg class="size-4"><use href="#down" /></svg></button>
            <button class="flex h-8 shrink-0 items-center gap-1.5 rounded border border-[#9e9e9e] px-3"><span><b class="font-medium">Amazon's reason:</b> All</span><svg class="size-4"><use href="#down" /></svg></button>
            <button class="flex h-8 shrink-0 items-center gap-1.5 rounded border border-[#9e9e9e] px-3"><span><b class="font-medium">Currency:</b> USD</span><svg class="size-4"><use href="#clear" /></svg></button>
            <button class="flex h-8 shrink-0 items-center gap-1.5 rounded border border-[#9e9e9e] px-3"><span><b class="font-medium">Has case ID:</b> All</span><svg class="size-4"><use href="#down" /></svg></button>
          </div>
          <div class="pt-4 pr-4 pl-4">
            <table class="w-full table-fixed border border-[#dadada] text-xs tracking-wide">
              <colgroup>
                <col class="w-[154px]" /><col class="w-[123px]" /><col class="w-[159px]" /><col class="w-[136px]" /><col class="w-[136px]" /><col class="w-[83px]" /><col class="w-[102px]" /><col class="w-[98px]" /><col class="w-[108px]" /><col />
              </colgroup>
              <thead class="bg-[#f8f8f8] text-sm tracking-normal">
                <tr class="h-[41px] text-left">
                  <th class="px-1 font-medium">Amazon case ID</th>
                  <th class="px-1 font-medium">Recovery case</th>
                  <th class="px-1 font-medium">Amazon's reason</th>
                  <th class="px-1 font-medium">SKU / FNSKU</th>
                  <th class="px-1 font-medium">Amazon order ID</th>
                  <th class="px-1 text-right font-medium">Units</th>
                  <th class="px-1 text-right font-medium">Amount</th>
                  <th class="px-1 text-right font-medium">Cost / unit</th>
                  <th class="px-1 text-right font-medium">Variance</th>
                  <th></th>
                </tr>
              </thead>
              <tbody id="payments"></tbody>
            </table>
          </div>
        </div>
        <div class="absolute inset-0 bg-black/20"></div>
      </main>
    </div>

    <section class="fixed top-16 right-0 bottom-0 w-[560px] border-l border-[#d5d5d5] bg-white text-xs leading-5 tracking-wide text-[#757575] shadow-[0_8px_10px_-5px_rgba(0,0,0,0.2),0_16px_24px_2px_rgba(0,0,0,0.14),0_6px_30px_5px_rgba(0,0,0,0.12)]">
      <div class="flex h-[65px] items-center border-b border-[#dcdcdc] bg-[#f4f4f4] px-4 text-black">
        <svg class="mr-2 size-5"><use href="#timeline" /></svg>
        <h2 class="mr-2 text-base font-bold">Loss event #141</h2>
        <span class="flex h-[26px] items-center gap-1.5 rounded-full bg-[#e1ece1] pr-2.5 pl-1.5 tracking-normal text-[#4caf50]"><svg class="size-3.5 fill-current"><use href="#cashcheck" /></svg>Reimbursed</span>
        <button aria-label="Close" class="mr-2.5 ml-auto"><svg class="size-[18px]"><use href="#close" /></svg></button>
      </div>
      <div class="px-4 pt-[18px]">
        <div class="flex items-center gap-2 leading-6"><a href="#" class="text-base font-bold text-[#0094dd]">BB002</a><span class="font-['DejaVu_Sans_Mono',monospace]">X0065B4D19</span></div>
        <div class="text-sm leading-6 text-[#616161]">Baby Bumble Romper</div>
        <div class="mt-1">Inventory ledger · Misplaced in the fulfillment center (M) · Amazon US</div>

        <ol class="mt-3.5 flex">
          <li>
            <div class="flex items-center gap-1"><span class="flex size-[18px] items-center justify-center rounded-full bg-[#4caf50]"><svg class="size-3 fill-white"><use href="#check" /></svg></span><span class="mr-1 h-0.5 flex-1 bg-[#dedede]"></span></div>
            <div class="mt-1 pr-[21px] font-medium text-[#212121]">Lost</div>
            <div class="pr-[21px]">Aug 27, 2026 · −1</div>
          </li>
          <li>
            <div class="flex items-center gap-1"><span class="flex size-[18px] items-center justify-center rounded-full bg-[#4caf50]"><svg class="size-3 fill-white"><use href="#check" /></svg></span><span class="mr-1 h-0.5 flex-1 bg-[#dedede]"></span></div>
            <div class="mt-1 pr-[21px] font-medium text-[#212121]">Researching</div>
            <div class="pr-[21px]">ended Sep 26, 2026</div>
          </li>
          <li>
            <div class="flex items-center gap-1"><span class="flex size-[18px] items-center justify-center rounded-full bg-[#4caf50]"><svg class="size-3 fill-white"><use href="#check" /></svg></span><span class="mr-1 h-0.5 flex-1 bg-[#dedede]"></span></div>
            <div class="mt-1 pr-[21px] font-medium text-[#212121]">Reimbursed</div>
            <div class="pr-[21px]">Sep 18 · $4.44</div>
          </li>
          <li>
            <div class="flex items-center gap-1"><span class="flex size-[18px] items-center justify-center rounded-full border-4 border-[#0094dd] bg-white shadow-[0_0_0_3px_#c5e7f8]"><i class="size-1 rounded-full bg-[#0094dd]"></i></span><span class="mr-1 h-0.5 flex-1 bg-[#dedede]"></span></div>
            <div class="mt-1 pr-[21px] font-medium text-[#212121]">Settled</div>
            <div class="pr-[21px]">Sep 22</div>
          </li>
          <li>
            <span class="block size-[18px] rounded-full border-2 border-[#bdbdbd]"></span>
            <div class="mt-1 font-medium text-[#9e9e9e]">Found / Reversed</div>
            <div>—</div>
          </li>
        </ol>

        <div class="mt-4 grid grid-cols-3 gap-2">
          <div class="rounded-lg border border-[#ebebeb] bg-[#fafafa] px-3 py-2">Cost consumed<div class="text-base leading-7 font-bold text-[#212121]">$6.63</div></div>
          <div class="rounded-lg border border-[#ebebeb] bg-[#fafafa] px-3 py-2">Amazon paid<div class="text-base leading-7 font-bold text-[#212121]">$4.44</div></div>
          <div class="rounded-lg border border-[#ebebeb] bg-[#fafafa] px-3 py-2">Variance<div class="text-base leading-7 font-bold text-[#b00020]">-$2.19</div></div>
        </div>

        <div class="mt-4 flex h-7 items-center text-sm text-[#212121]">
          Can the units come back?
          <span class="ml-2 flex h-5 items-center gap-1 rounded-full bg-[#fff1e0] pr-2 pl-1 text-[10px] tracking-normal text-[#fb8c00]"><svg class="size-3 fill-current"><use href="#search" /></svg>May reappear</span>
          <button class="mr-3 ml-auto flex items-center gap-2 text-xs font-medium tracking-widest text-[#0094dd]"><svg class="size-3.5 fill-current"><use href="#pencil" /></svg>Change</button>
        </div>
        <div class="mt-1 border-b border-[#ebebeb] pb-4">Claim deadline Oct 26, 2026</div>

        <h3 class="mt-3 text-sm leading-6 font-bold tracking-normal text-[#212121]">Everything tied to this loss</h3>
        <div class="mt-2 flex gap-3 border-b border-[#ebebeb] pt-1.5 pb-2">
          <span class="flex size-8 shrink-0 items-center justify-center rounded-lg bg-[#fdebed]"><svg class="size-4 fill-[#b00020]"><use href="#boxminus" /></svg></span>
          <div>
            <div class="flex h-5 items-baseline gap-2"><b class="text-sm leading-5 font-medium text-[#212121]">Lost</b>Aug 27, 2026</div>
            <div class="text-[#424242]">-1 unit · $6.63 · cost $6.63/unit</div>
            <div>Inventory ledger · Misplaced in the fulfillment center (M) · MDW2 · SELLABLE · ref 20084126092513</div>
          </div>
        </div>
        <div class="flex gap-3 border-b border-[#ebebeb] py-2">
          <span class="flex size-8 shrink-0 items-center justify-center rounded-lg bg-[#e8f5e9]"><svg class="size-3.5 fill-[#4caf50] text-[#4caf50]"><use href="#cashplus" /></svg></span>
          <div class="flex-1">
            <div class="flex h-5 items-baseline gap-2"><b class="text-sm leading-5 font-medium text-[#212121]">Reimbursed</b>09/18/2026, 16:47:56</div>
            <div class="text-[#424242]">+1 unit · $4.44</div>
            <div class="flex gap-2"><a href="#" class="text-[#0094dd]">Reimbursement 7150435603</a>Lost in warehouse<a href="#" class="text-[#0094dd]">Recovery case</a></div>
          </div>
          <button aria-label="Unlink reimbursement" class="mt-2 mr-2 size-4"><svg class="size-4 fill-[#757575]"><use href="#unlink" /></svg></button>
        </div>
        <div class="flex gap-3 py-2">
          <span class="flex size-8 shrink-0 items-center justify-center rounded-lg bg-[#e3f2fd]"><svg class="size-3.5 fill-[#0094dd]"><use href="#bank" /></svg></span>
          <div class="flex-1">
            <div class="flex h-5 items-baseline gap-2"><b class="text-sm leading-5 font-medium text-[#212121]">Settled</b>09/22/2026, 11:28:52</div>
            <div class="text-[#424242]">· $4.44</div>
            <div class="flex gap-2"><a href="#" class="text-[#0094dd]">Settlement 21111117919</a>WAREHOUSE_LOST</div>
          </div>
          <button aria-label="Unlink settlement" class="mt-2 mr-2 size-4"><svg class="size-4 fill-[#757575]"><use href="#unlink" /></svg></button>
        </div>

        <h3 class="mt-3 border-t border-[#ebebeb] pt-3 text-sm leading-6 font-bold tracking-normal text-[#212121]">Link a payment by hand</h3>
        <p class="mt-1">When automatic matching missed a payment for this loss (or picked the wrong one), enter Amazon's reimbursement ID.</p>
        <div class="mt-2 flex items-start gap-2">
          <input class="h-10 min-w-0 flex-1 rounded border border-[#9e9e9e] px-4 tracking-normal outline-none placeholder:text-[#757575]" type="text" aria-label="Reimbursement ID" placeholder="Reimbursement ID" />
          <input class="h-10 w-[120px] rounded border border-[#9e9e9e] px-4 tracking-normal outline-none placeholder:text-[#757575]" type="text" aria-label="Units (optional)" placeholder="Units (optional)" />
          <button class="mt-1 h-7 w-[58px] rounded border border-[#b8e2f6] font-medium tracking-widest text-[#b8e2f6]" disabled>FIND</button>
        </div>
      </div>
    </section>

    <script>
      // case, sku, fnsku, units, amount, cost per unit, variance
      var payments = [
        ["#11", "BB002", "X0065B4D19", 1, "$4.44", "$6.63", "-$2.19"],
        ["#1", "BB001", "X009CDFDCE", 2, "$8.19", "$4.55", "-$0.91"],
        ["", "LT020", "X0086D5DD3", 2, "$17.49", "$13.25", "-$9.01"],
        ["", "CC016", "X00465EC06", 2, "$22.93", "$12.74", "-$2.55"],
        ["", "PP010", "X001118F5E", 1, "$6.71", "$10.17", "-$3.46"],
        ["", "LT016", "X0002DFD29", 2, "$19.68", "$14.07", "-$8.46"],
        ["", "CC009", "X000AD9912", 1, "$4.54", "$6.48", "-$1.94"],
        ["", "LT020", "X0086D5DD3", 3, "$26.73", "$13.50", "-$13.77"],
        ["#4", "BB016", "X0031112BC", 2, "$24.71", "$12.72", "-$0.73"],
        ["", "LT010", "X001F26A5A", 1, "$8.69", "$9.27", "-$0.58"],
        ["", "CC006", "X00C1C69EF", 1, "$2.17", "$2.68", "-$0.51"],
        ["", "BB003", "X002850955", 2, "$15.99", "$8.64", "-$1.29"],
        ["", "CC016", "X00465EC06", 1, "$11.20", "$12.74", "-$1.54"],
      ];

      var auto =
        '<span class="mt-0.5 inline-flex h-5 items-center gap-1 rounded-full bg-[#ddeeec] pr-2 pl-1 align-middle text-[10px] tracking-normal text-[#009688]"><svg class="size-3 fill-current"><use href="#robot" /></svg>Automatic</span>';

      document.getElementById("payments").innerHTML = payments
        .map(function (p) {
          var link = p[0] ? `<a href="#" class="text-[#0094dd]">${p[0]}</a>` : auto;
          return `<tr class="h-[41px] border-t border-[#dadada]">
            <td class="px-1">—</td>
            <td class="px-1">${link}</td>
            <td class="px-1">Lost in warehouse</td>
            <td class="px-1 leading-5"><a href="#" class="block text-[#0094dd]">${p[1]}</a><span class="block text-[#757575]">${p[2]}</span></td>
            <td class="px-1">—</td>
            <td class="px-1 text-right font-medium">${p[3]}</td>
            <td class="px-1 text-right font-medium">${p[4]}</td>
            <td class="px-1 text-right">${p[5]}</td>
            <td class="px-1 text-right font-medium text-[#b00020]">${p[6]}</td>
            <td></td>
          </tr>`;
        })
        .join("");
    </script>
  </body>
</html>
